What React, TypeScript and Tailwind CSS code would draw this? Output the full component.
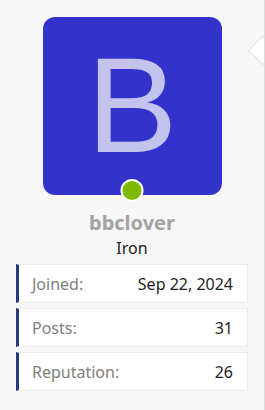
const stats = [
  { label: "Joined:", value: "Sep 22, 2024" },
  { label: "Posts:", value: "31" },
  { label: "Reputation:", value: "26" },
];

export default function App() {
  return (
    <div
      className="relative w-[265px] h-[410px] bg-[#f7f7f7] border-r border-[#dcdcdc] overflow-hidden"
      style={{ fontFamily: '"Noto Sans", "Open Sans", sans-serif' }}
    >
      {/* message arrow */}
      <div className="absolute right-[-9px] top-[40px] w-[21px] h-[21px] rotate-45 bg-white border border-[#dcdcdc]" />

      <div className="flex flex-col items-center px-4 pt-[17px]">
        <div className="relative w-[179px] h-[178px] rounded-[12px] bg-[#3333cc] flex items-center justify-center">
          <span
            className="text-[136px] leading-none text-[#c3c3ee] -mt-[2px]"
            style={{ fontFamily: '"Liberation Sans", Arial, sans-serif' }}
          >
            B
          </span>
          <span className="absolute left-1/2 -translate-x-1/2 bottom-[-7px] w-[23px] h-[23px] rounded-full bg-[#7fba00] border-2 border-white" />
        </div>

        <div className="mt-[16px] text-[20px] leading-[24px] font-bold text-[#a3a3a3]">bbclover</div>
        <div className="mt-[3px] text-[16px] leading-[21px] text-[#222]">Iron</div>

        <div className="mt-[5px] w-full flex flex-col gap-[5px]">
          {stats.map((s) => (
            <div
              key={s.label}
              className="h-[39px] flex items-center justify-between bg-white border border-[#ececec] border-l-[3px] border-l-[#253a79] pl-[13px] pr-[14px] text-[16px]"
            >
              <span className="text-[#808080]">{s.label}</span>
              <span className="text-[#1e1e1e]">{s.value}</span>
            </div>
          ))}
        </div>
      </div>
    </div>
  );
}
